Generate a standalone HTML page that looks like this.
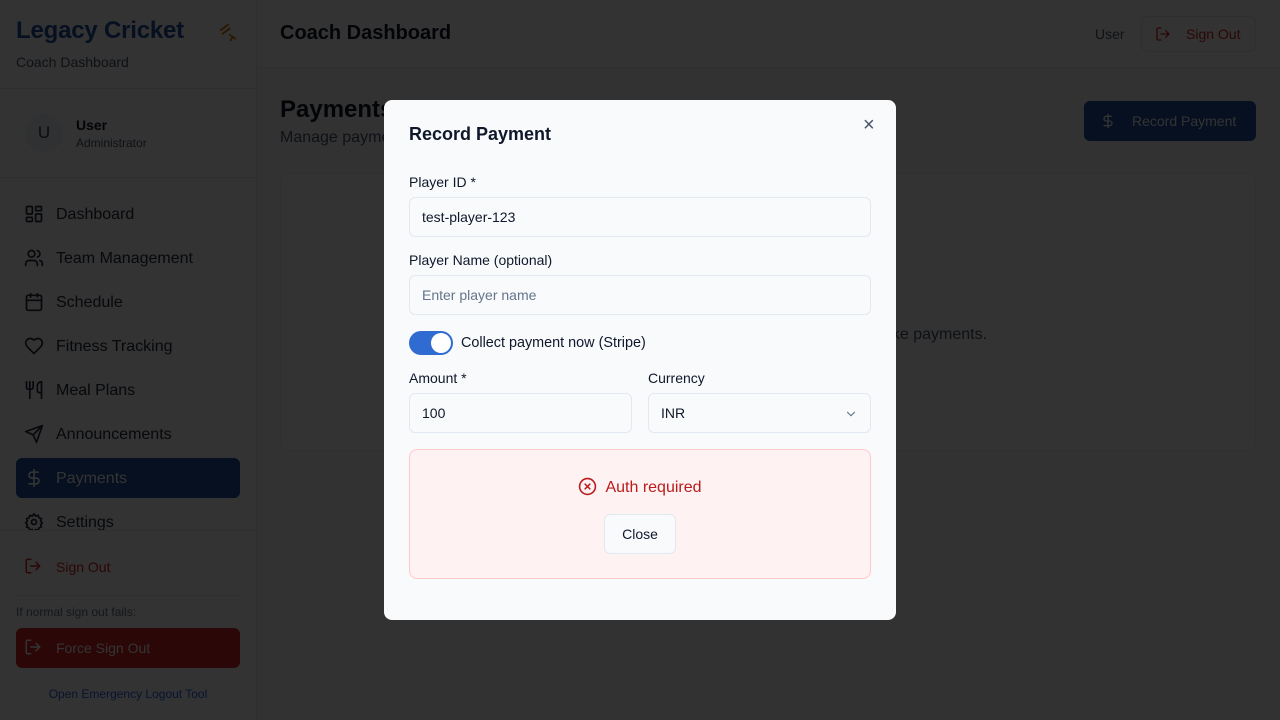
<!DOCTYPE html>
<html><head><meta charset="utf-8"><style>
*{box-sizing:border-box;margin:0;padding:0}
body{width:1280px;height:720px;overflow:hidden;font-family:"Liberation Sans",sans-serif;background:#f8fafc;position:relative;color:#0f172a}
.sb{position:absolute;left:0;top:0;width:257px;height:720px;background:#fcfcfd;border-right:1px solid #e2e8f0}
.logo{position:absolute;left:16px;top:17px;font-size:24px;font-weight:bold;color:#1e4fa0;letter-spacing:-0.2px}
.sub{position:absolute;left:16px;top:54px;font-size:14px;color:#475569}
.hr{position:absolute;left:0;right:0;height:1px;background:#e2e8f0}
.av{position:absolute;left:25px;top:114px;width:38px;height:38px;border-radius:50%;background:#f1f5f9;text-align:center;line-height:38px;font-size:17px;color:#334155}
.nav{position:absolute;left:16px;width:224px;height:40px;border-radius:6px;font-size:16px;color:#1e293b;padding-left:40px;line-height:41px}
.nav svg{position:absolute;left:8px;top:10px}
.act{background:#1e4fa0;color:#fff}
.main{position:absolute;left:257px;top:0;right:0}
.top{height:68px;border-bottom:1px solid #e2e8f0;background:#fff}
svg{fill:none;stroke:currentColor;stroke-width:2;stroke-linecap:round;stroke-linejoin:round}
.ov{position:absolute;inset:0;background:rgba(0,0,0,.8)}
.modal{position:absolute;left:384px;top:100px;width:512px;height:520px;background:#f8fafc;border-radius:8px}
.lbl{position:absolute;left:25px;font-size:14px;color:#0f172a}
.inp{position:absolute;height:40px;border:1px solid #e2e8f0;border-radius:6px;background:#f8fafc;font-size:14px;line-height:38px;padding-left:12px}
</style></head><body>
<div class="sb">
<div class="logo">Legacy Cricket</div>
<svg style="position:absolute;left:217px;top:22px;color:#d97706" width="22" height="22" viewBox="0 0 24 24"><path d="M4 9l8-6M6 13l8-6M14 14l6 4M17 16l-2 4"/></svg>
<div class="sub">Coach Dashboard</div>
<div class="hr" style="top:88px"></div>
<div class="av">U</div>
<div style="position:absolute;left:76px;top:117px;font-size:14px;font-weight:bold">User</div>
<div style="position:absolute;left:76px;top:136px;font-size:12px;color:#475569">Administrator</div>
<div class="hr" style="top:177px"></div>
<div class="nav" style="top:194px"><svg width="20" height="20" viewBox="0 0 24 24"><rect x="3" y="3" width="7" height="9" rx="1"/><rect x="14" y="3" width="7" height="5" rx="1"/><rect x="14" y="12" width="7" height="9" rx="1"/><rect x="3" y="16" width="7" height="5" rx="1"/></svg>Dashboard</div>
<div class="nav" style="top:238px"><svg width="20" height="20" viewBox="0 0 24 24"><circle cx="9" cy="7" r="4"/><path d="M2 21v-2a4 4 0 0 1 4-4h6a4 4 0 0 1 4 4v2M16 3.1a4 4 0 0 1 0 7.8M22 21v-2a4 4 0 0 0-3-3.9"/></svg>Team Management</div>
<div class="nav" style="top:282px"><svg width="20" height="20" viewBox="0 0 24 24"><rect x="3" y="4" width="18" height="18" rx="2"/><path d="M16 2v4M8 2v4M3 10h18"/></svg>Schedule</div>
<div class="nav" style="top:326px"><svg width="20" height="20" viewBox="0 0 24 24"><path d="M19 14c1.5-1.5 3-3.2 3-5.5A5.5 5.5 0 0 0 16.5 3c-1.8 0-3 .5-4.5 2-1.5-1.5-2.7-2-4.5-2A5.5 5.5 0 0 0 2 8.5c0 2.300 1.5 4 3 5.5l7 7z"/></svg>Fitness Tracking</div>
<div class="nav" style="top:370px"><svg width="20" height="20" viewBox="0 0 24 24"><path d="M3 2v7c0 1.1.9 2 2 2h4a2 2 0 0 0 2-2V2M7 2v20M21 15V2a5 5 0 0 0-5 5v6c0 1.1.9 2 2 2h3zm0 0v7"/></svg>Meal Plans</div>
<div class="nav" style="top:414px"><svg width="20" height="20" viewBox="0 0 24 24"><path d="M22 2L11 13M22 2l-7 20-4-9-9-4z"/></svg>Announcements</div>
<div class="nav act" style="top:458px"><svg width="20" height="20" viewBox="0 0 24 24"><path d="M12 2v20M17 5H9.5a3.5 3.5 0 0 0 0 7h5a3.5 3.5 0 0 1 0 7H6"/></svg>Payments</div>
<div class="nav" style="top:502px;height:28px;overflow:hidden"><svg width="20" height="20" viewBox="0 0 24 24"><circle cx="12" cy="12" r="3"/><path d="M12 2l2 3 3-1 1 3 3 1-1 3 2 2-2 2 1 3-3 1-1 3-3-1-2 3-2-3-3 1-1-3-3-1 1-3-2-2 2-2-1-3 3-1 1-3 3 1z"/></svg>Settings</div>
<div class="hr" style="top:530px"></div>
<div class="nav" style="top:547px;font-size:14px;color:#dc2626"><svg width="18" height="18" viewBox="0 0 24 24"><path d="M9 21H5a2 2 0 0 1-2-2V5a2 2 0 0 1 2-2h4M16 17l5-5-5-5M21 12H9"/></svg>Sign Out</div>
<div class="hr" style="top:595px;left:16px;right:16px"></div>
<div style="position:absolute;left:16px;top:605px;font-size:12px;color:#64748b">If normal sign out fails:</div>
<div class="nav" style="top:628px;background:#dc2626;color:#fff;font-size:14px"><svg width="18" height="18" viewBox="0 0 24 24"><path d="M9 21H5a2 2 0 0 1-2-2V5a2 2 0 0 1 2-2h4M16 17l5-5-5-5M21 12H9"/></svg>Force Sign Out</div>
<div style="position:absolute;left:0;width:256px;top:687px;text-align:center;font-size:12px;color:#2563eb">Open Emergency Logout Tool</div>
</div>
<div class="main">
<div class="top"><div style="position:absolute;left:23px;top:22px;font-size:20px;font-weight:bold">Coach Dashboard</div>
<div style="position:absolute;left:838px;top:26px;font-size:14px;color:#475569">User</div>
<div style="position:absolute;left:884px;top:16px;width:115px;height:36px;border:1px solid #e2e8f0;border-radius:6px;color:#dc2626;font-size:14px;line-height:34px;padding-left:44px"><svg style="position:absolute;left:13px;top:9px" width="16" height="16" viewBox="0 0 24 24"><path d="M9 21H5a2 2 0 0 1-2-2V5a2 2 0 0 1 2-2h4M16 17l5-5-5-5M21 12H9"/></svg>Sign Out</div></div>
<div style="position:absolute;left:23px;top:96px;font-size:24px;font-weight:bold">Payments</div>
<div style="position:absolute;left:23px;top:129px;font-size:16px;color:#475569">Manage payments</div>
<div style="position:absolute;left:827px;top:101px;width:172px;height:40px;background:#1e4fa0;border-radius:6px;color:#fff;font-size:14px;line-height:40px;padding-left:48px"><svg style="position:absolute;left:16px;top:12px" width="16" height="16" viewBox="0 0 24 24"><path d="M12 2v20M17 5H9.5a3.5 3.5 0 0 0 0 7h5a3.5 3.5 0 0 1 0 7H6"/></svg>Record Payment</div>
<div style="position:absolute;left:23px;top:173px;width:976px;height:278px;border:1px solid #e2e8f0;border-radius:8px;background:#fff"><div style="position:absolute;left:602px;top:152px;font-size:16px;color:#475569">ake payments.</div></div>
</div>
<div class="ov"></div>
<div class="modal">
<div style="position:absolute;left:25px;top:24px;font-size:18px;font-weight:bold">Record Payment</div>
<div style="position:absolute;left:479px;top:14px;font-size:20px;color:#475569">×</div>
<div class="lbl" style="top:74px">Player ID *</div>
<div class="inp" style="left:25px;top:97px;width:462px">test-player-123</div>
<div class="lbl" style="top:152px">Player Name (optional)</div>
<div class="inp" style="left:25px;top:175px;width:462px;color:#64748b">Enter player name</div>
<div style="position:absolute;left:25px;top:231px;width:44px;height:24px;border-radius:12px;background:#2f6bd0"><div style="position:absolute;right:2px;top:2px;width:20px;height:20px;border-radius:50%;background:#fff"></div></div>
<div class="lbl" style="left:77px;top:235px;font-size:14.4px">Collect payment now (Stripe)</div>
<div class="lbl" style="top:270px">Amount *</div>
<div class="lbl" style="left:264px;top:270px">Currency</div>
<div class="inp" style="left:25px;top:293px;width:223px">100</div>
<div class="inp" style="left:264px;top:293px;width:223px">INR<svg style="position:absolute;right:12px;top:13px;color:#64748b" width="14" height="14" viewBox="0 0 24 24"><path d="M6 9l6 6 6-6"/></svg></div>
<div style="position:absolute;left:25px;top:349px;width:462px;height:130px;border:1px solid #fecaca;border-radius:8px;background:#fef2f2">
<div style="position:absolute;left:0;right:0;top:27px;text-align:center;font-size:16px;color:#b91c1c"><svg style="vertical-align:-4px;margin-right:8px" width="19" height="19" viewBox="0 0 24 24"><circle cx="12" cy="12" r="10"/><path d="M15 9l-6 6M9 9l6 6"/></svg>Auth required</div>
<div style="position:absolute;left:194px;top:64px;width:72px;height:40px;border:1px solid #e2e8f0;border-radius:6px;background:#f8fafc;text-align:center;line-height:38px;font-size:14px">Close</div>
</div>
</div>
</body></html>
